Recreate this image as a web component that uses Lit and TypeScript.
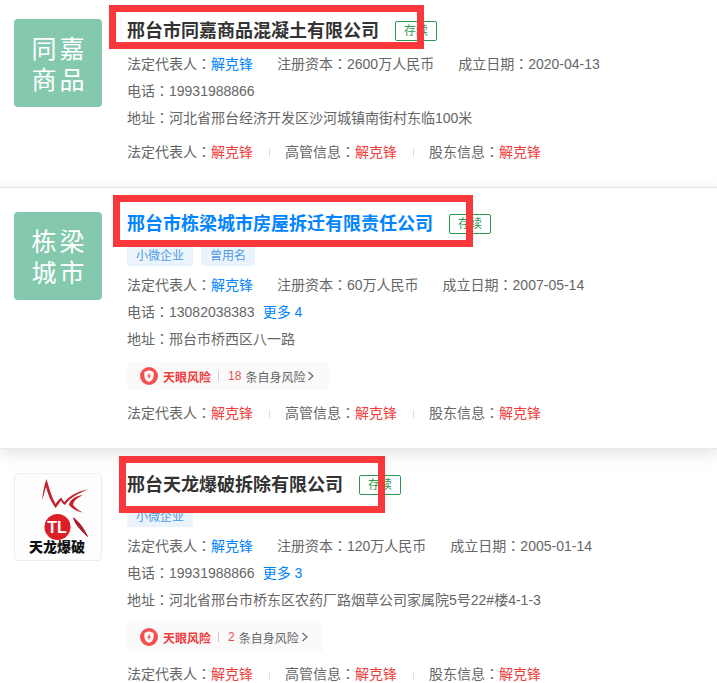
import { LitElement, html, css, svg, nothing } from "lit";
import { customElement, property } from "lit/decorators.js";
import { classMap } from "lit/directives/class-map.js";

interface Company {
  title: string;
  avatar?: string;
  active?: boolean;
  mark: "near" | "mid" | "deep";
  tags: string[];
  person: string;
  capital: string;
  founded: string;
  phone: string;
  more?: number;
  address: string;
  risks?: number;
}

const companies: Company[] = [
  {
    title: "邢台市同嘉商品混凝土有限公司",
    avatar: "同嘉商品",
    mark: "near",
    tags: [],
    person: "解克锋",
    capital: "2600万人民币",
    founded: "2020-04-13",
    phone: "19931988866",
    address: "河北省邢台经济开发区沙河城镇南街村东临100米",
  },
  {
    title: "邢台市栋梁城市房屋拆迁有限责任公司",
    avatar: "栋梁城市",
    active: true,
    mark: "mid",
    tags: ["小微企业", "曾用名"],
    person: "解克锋",
    capital: "60万人民币",
    founded: "2007-05-14",
    phone: "13082038383",
    more: 4,
    address: "邢台市桥西区八一路",
    risks: 18,
  },
  {
    title: "邢台天龙爆破拆除有限公司",
    mark: "deep",
    tags: ["小微企业"],
    person: "解克锋",
    capital: "120万人民币",
    founded: "2005-01-14",
    phone: "19931988866",
    more: 3,
    address: "河北省邢台市桥东区农药厂路烟草公司家属院5号22#楼4-1-3",
    risks: 2,
  },
];

// Full-width colon, drawn centred in its cell.
const label = (text: string) =>
  html`<span>${text}<span class="colon" lang="zh-TW">：</span></span>`;

const shield = svg`
  <circle cx="9" cy="9" r="9" fill="#f4504f"/>
  <path d="M9 3.2 L13.6 4.9 V9 C13.6 12 11.6 14 9 15 C6.4 14 4.4 12 4.4 9 V4.9 Z" fill="#fff"/>
  <path d="M9.9 5.6 L6.9 9.6 H8.7 L8.1 12.4 L11.2 8.4 H9.4 Z" fill="#f4504f"/>`;

const logo = svg`
  <path d="M27 26 C28 19 29 11 31.5 5 C34 13 36 22 40.5 30 C42 28 44 25 46.5 23.5 C47 25 48 27 49.5 28
           C55 21 63 17.5 72.5 15.5 C64 19.5 55 23 50 31 C48 30 47 28.5 46 26.5 C44 29 42.5 32 40.5 34
           C36 28 33 21 31 13 C29.5 17 29 22 27 26 Z" fill="#bd2430"/>
  <path d="M68 21 C60 22 54.5 26 54 31 C57 35 62 37 67.5 38.5 C63 35.5 59.5 33.5 58 30.5
           C59 26 63 23.5 68 21 Z" fill="#c4232e"/>
  <path d="M58.5 44 C63 47 68 53 72.5 62.5 C68 58 61 52 58.5 44 Z" fill="#a9202c" stroke="#a9202c"/>
  <circle cx="42.5" cy="53" r="13" fill="#dc1f26"/>
  <text x="42" y="59" text-anchor="middle" class="logo-mono">TL</text>
  <text x="42" y="78" text-anchor="middle" class="logo-name">天龙爆破</text>`;

@customElement("company-card")
export class CompanyCard extends LitElement {
  @property({ attribute: false }) company!: Company;

  static styles = css`
    :host {
      display: block;
    }
    .card {
      display: flex;
      align-items: flex-start;
      gap: 25px;
      padding: 24px 14px 26px;
      border-bottom: 1px solid #e9e9e9;
    }
    :host(:first-of-type) .card {
      padding-top: 19px;
    }
    :host(:last-of-type) .card {
      padding-bottom: 0;
      border-bottom: 0;
    }
    .card.active {
      position: relative;
      background: #fff;
      box-shadow: 0 4px 16px rgba(0, 0, 0, 0.13);
    }
    .avatar {
      box-sizing: border-box;
      flex: none;
      width: 88px;
      height: 88px;
      border-radius: 4px;
    }
    .tile {
      display: grid;
      grid-template-columns: 28px 28px;
      grid-auto-rows: 31px;
      place-content: center;
      place-items: center;
      padding-top: 3px;
      background: #84c9ae;
      color: #fff;
      font-size: 25px;
      line-height: 31px;
    }
    .logo {
      border: 1px solid #ececec;
      background: #fdfdfd;
    }
    .logo-mono {
      fill: #fff;
      font: bold 16px "Liberation Sans", sans-serif;
    }
    .logo-name {
      fill: #111;
      font: 900 14px "Noto Sans CJK SC", sans-serif;
    }
    .body {
      flex: 1;
      min-width: 0;
    }
    .head {
      display: flex;
      align-items: center;
      gap: 16px;
      height: 24px;
    }
    .title {
      position: relative;
      margin: 0;
      font-size: 18px;
      line-height: 24px;
      font-weight: bold;
      white-space: nowrap;
    }
    .title a {
      color: #333;
    }
    .active .title a {
      color: #0084ff;
    }
    .mark {
      position: absolute;
      z-index: 1;
      border: 7px solid #fa383b;
      pointer-events: none;
    }
    .mark.near {
      inset: -14px -45px -6px -18px;
    }
    .mark.mid {
      inset: -17px -40px -11px -14px;
    }
    .mark.deep {
      inset: -17px -42px -16px -8px;
    }
    .status {
      box-sizing: border-box;
      height: 20px;
      padding: 0 8px;
      border: 1px solid #289b50;
      border-radius: 2px;
      color: #289b50;
      font-size: 12px;
      line-height: 18px;
      white-space: nowrap;
    }
    .tags {
      display: flex;
      gap: 8px;
      margin: 10px 0 6px;
      padding: 0;
      list-style: none;
    }
    .tag {
      padding: 0 9px;
      border-radius: 2px;
      background: #ebf4fc;
      color: #4e9ae6;
      font-size: 12px;
      line-height: 20px;
    }
    .facts {
      line-height: 27px;
    }
    .facts.plain {
      margin-top: 8px;
    }
    .row {
      display: flex;
      flex-wrap: wrap;
      column-gap: 24px;
    }
    .row.phone {
      column-gap: 8px;
    }
    a {
      color: #0084ff;
      text-decoration: none;
    }
    .colon {
      font-family: "Noto Sans CJK TC", sans-serif;
      line-height: 1;
    }
    .risk {
      display: inline-flex;
      align-items: center;
      height: 28px;
      margin-top: 9px;
      padding: 0 14px 0 13px;
      border-radius: 2px;
      background: #fafafa;
      color: #666;
      font-size: 12px;
      vertical-align: top;
    }
    .risk-name {
      margin-left: 5px;
      color: #f03c3c;
      font-weight: bold;
    }
    .bar {
      width: 1px;
      height: 10px;
      margin: 0 9px 0 7px;
      background: #ccc;
    }
    .count {
      margin-right: 4px;
      color: #e8504f;
    }
    .chevron {
      margin-left: 2px;
    }
    .matches {
      display: flex;
      align-items: center;
      margin-top: 14px;
      line-height: 18px;
    }
    .plain ~ .matches {
      margin-top: 11px;
    }
    .match + .match::before {
      content: "";
      display: inline-block;
      width: 1px;
      height: 8px;
      margin: 0 15px 0 16px;
      background: #ddd;
    }
    .match a {
      color: #f03c3c;
    }
  `;

  render() {
    const c = this.company;
    return html`
      <article class=${classMap({ card: true, active: !!c.active })}>
        ${c.avatar
          ? html`<div class="avatar tile">${[...c.avatar].map((ch) => html`<span>${ch}</span>`)}</div>`
          : html`<svg class="avatar logo" viewBox="0 0 86 86" role="img" aria-label="天龙爆破">${logo}</svg>`}
        <div class="body">
          <div class="head">
            <h2 class="title"><a href="#">${c.title}</a><span class="mark ${c.mark}"></span></h2>
            <span class="status">存续</span>
          </div>
          ${c.tags.length
            ? html`<ul class="tags">${c.tags.map((t) => html`<li class="tag">${t}</li>`)}</ul>`
            : nothing}
          <div class=${classMap({ facts: true, plain: !c.tags.length })}>
            <div class="row">
              <span>${label("法定代表人")}<a href="#">${c.person}</a></span>
              <span>${label("注册资本")}${c.capital}</span>
              <span>${label("成立日期")}${c.founded}</span>
            </div>
            <div class="row phone">
              <span>${label("电话")}${c.phone}</span>
              ${c.more ? html`<a href="#">更多 ${c.more}</a>` : nothing}
            </div>
            <div class="row"><span>${label("地址")}${c.address}</span></div>
          </div>
          ${c.risks
            ? html`<a class="risk" href="#">
                <svg width="18" height="18" viewBox="0 0 18 18" aria-hidden="true">${shield}</svg>
                <span class="risk-name">天眼风险</span><span class="bar"></span>
                <span class="count">${c.risks}</span><span>条自身风险</span>
                <svg class="chevron" width="8" height="10" viewBox="0 0 8 10" aria-hidden="true">
                  <path d="M1.5 1 L6 5 L1.5 9" fill="none" stroke="#666" stroke-width="1.2" />
                </svg>
              </a>`
            : nothing}
          <div class="matches">
            ${["法定代表人", "高管信息", "股东信息"].map(
              (t) => html`<span class="match">${label(t)}<a href="#">${c.person}</a></span>`
            )}
          </div>
        </div>
      </article>
    `;
  }
}

@customElement("app-root")
export class AppRoot extends LitElement {
  static styles = css`
    :host {
      display: block;
      background: #fff;
      color: #666;
      font: 14px "Liberation Sans", "Noto Sans CJK SC", sans-serif;
    }
  `;

  render() {
    return html`<main>${companies.map((c) => html`<company-card .company=${c}></company-card>`)}</main>`;
  }
}
